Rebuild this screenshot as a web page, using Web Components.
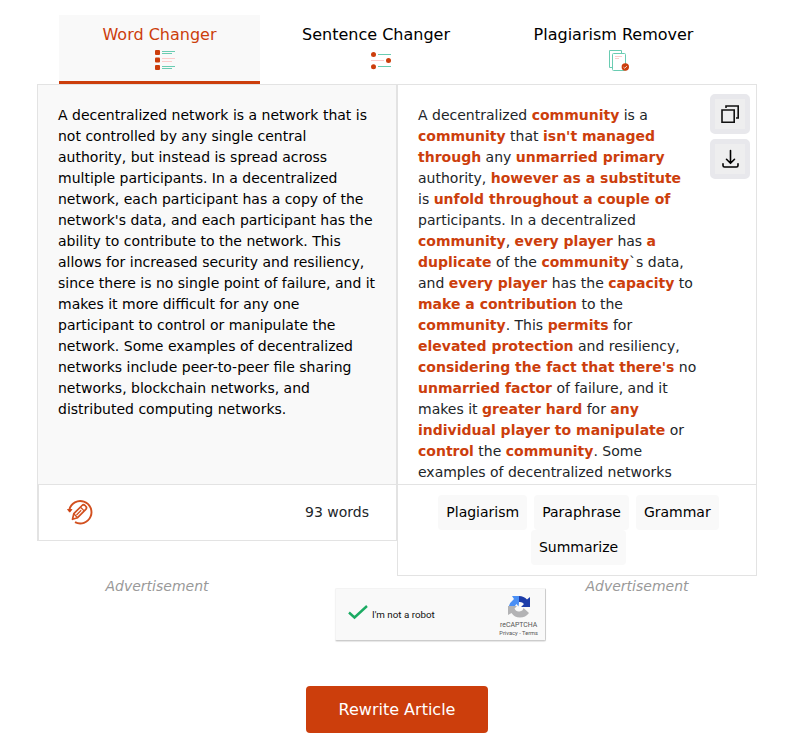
<!DOCTYPE html>
<html lang="en"><head><meta charset="utf-8"><title>Article Rewriter</title>
<style>
html,body{margin:0;background:#fff}
body{font:14px/21px "DejaVu Sans",sans-serif;color:#212529;height:753px;overflow:hidden}
</style></head><body>
<rewriter-app></rewriter-app>
<script>
function define(name, html){
  const t=document.createElement('template');t.innerHTML=html;
  customElements.define(name,class extends HTMLElement{
    constructor(){super();this.attachShadow({mode:'open'}).append(t.content.cloneNode(true));}
  });
}
define('tool-tab',`<style>
:host{display:flex;flex-direction:column;align-items:center;box-sizing:border-box;height:69px;padding-top:8px;font-size:16px;line-height:24px;color:#000;white-space:nowrap;border-bottom:3px solid transparent}
:host([active]){background:#f9f9f9;color:#cc3e0c;border-color:#cc3e0c}
.icon{height:20px;margin:3px 0 0 10px}
</style><slot></slot><div class="icon"><slot name="icon"></slot></div>`);
define('icon-button',`<style>
:host{display:grid;place-items:center;box-sizing:border-box;width:40px;height:40px;border:5px solid #e8e8ec;border-radius:5px;background:#eeeeef}
</style><slot></slot>`);
define('tool-chip',`<style>
:host{display:block;box-sizing:border-box;height:35px;padding:7px 8px;border-radius:4px;background:#f9f9f9;color:#000;white-space:nowrap}
</style><slot></slot>`);
define('source-panel',`<style>
:host{display:block;box-sizing:border-box;width:360px;height:457px;border:1px solid #e3e3e3}
.text{box-sizing:border-box;height:399px;padding:20px 17px 0 20px;background:#f9f9f9;color:#000}
.foot{display:flex;justify-content:space-between;align-items:center;box-sizing:border-box;height:56px;padding:0 27px 0 28px;border-top:1px solid #e3e3e3;border-left:1px solid #e3e3e3}
svg{display:block;margin-bottom:1px}
</style><div class="text"><slot></slot></div>
<div class="foot"><svg width="26" height="26" viewBox="0 0 26 26" fill="none" stroke="#d2501f">
<path d="M2.400 10.500A11.200 11.200 0 1 1 8 23.100" stroke-width="1.900"/><path d="M.5 10.500h4.500l-2.300 2.700z" fill="#cc3e0c" stroke="#cc3e0c" stroke-width=".8"/>
<path d="M5.500 20.300l1.300-5.600 8.200-8.200a2.200 2.200 0 0 1 3.100 0l.7.8a2.200 2.200 0 0 1 0 3.100L10.600 18.700z" stroke-width="1.700" stroke-linejoin="round"/><path d="M13.500 8.200l3.700 3.700M6.800 14.800l3.800 3.900M9.500 16l4.700-4.700" stroke-width="1.300"/></svg><span>93 words</span></div>`);
define('result-panel',`<style>
:host{display:block;box-sizing:border-box;width:360px;height:492px;border:1px solid #e3e3e3}
.body{display:flex;justify-content:space-between;box-sizing:border-box;height:399px;padding:0 6px 0 20px;overflow:hidden}
.text{width:281px;padding-top:20px}
.tools{display:flex;flex-direction:column;gap:5px;padding-top:9px}
.chips{display:flex;flex-wrap:wrap;justify-content:center;align-content:flex-start;column-gap:7px;box-sizing:border-box;height:91px;padding:10px 32px 0 35px;border-top:1px solid #e3e3e3}
</style><div class="body"><div class="text"><slot></slot></div><div class="tools">
<icon-button><svg width="20" height="20" viewBox="0 0 20 20" fill="none" stroke="#111" stroke-width="1.600"><path d="M2 6h12.200v12.200H2z"/><path d="M6 4V2h12.200v12H16"/></svg></icon-button>
<icon-button><svg width="20" height="20" viewBox="0 0 20 20" fill="none" stroke="#000" stroke-width="1.600" stroke-linecap="round" stroke-linejoin="round"><path d="M10.500 1.500v12.500M6.500 10.300l4 4 4-4M3 14.800V16.500q0 1.500 1.500 1.500h12q1.500 0 1.500-1.500v-1.700"/></svg></icon-button>
</div></div><div class="chips"><tool-chip>Plagiarism</tool-chip><tool-chip>Paraphrase</tool-chip><tool-chip>Grammar</tool-chip><tool-chip>Summarize</tool-chip></div>`);
define('robot-check',`<style>
:host{display:flex;align-items:center;box-sizing:border-box;width:211px;height:53px;padding:0 7px 0 12px;background:#f9f9f9;border:1px solid #f3f3f3;border-right-color:#ccc;border-bottom-color:#ccc;border-radius:2px;box-shadow:0 1px 1px #e6e6e6;font-family:Roboto,sans-serif;color:#111}
.label{margin:0 0 0 4px;font-size:9.800px;line-height:12px;flex:1;white-space:nowrap}
.check{margin-bottom:5px}
.brand{display:flex;flex-direction:column;align-items:center;color:#555;padding-top:3px}
.name{font-size:6.900px;line-height:8px;margin-top:3px}.legal{font-size:5.700px;line-height:8px}
svg{display:block}
</style><svg class="check" width="20" height="18" viewBox="0 0 20 18" fill="none" stroke="#1bab63" stroke-width="2.400"><path d="M1 9.500l5.500 5L19 3"/></svg>
<span class="label">I'm not a robot</span><div class="brand"><svg width="24" height="22" viewBox="0 0 24 22">
<path d="M12 0H5l2 3Q3 6 1.500 11H8q0-2 1.500-3l2 2.500L12 7z" fill="#4a8ff5"/>
<path d="M12 0q5 .2 8 3.500L23 1v10h-9l3-3q-2-2.500-5-2z" fill="#1c3ca9"/>
<path d="M1 10h9l-2.500 2.500q1.500 3.500 5 3t4-3.500l5.500 5q-3.500 4.500-9 4.500T4.500 17L1 19z" fill="#b3b3b5"/></svg>
<span class="name">reCAPTCHA</span><span class="legal">Privacy - Terms</span></div>`);
define('primary-button',`<style>
:host{display:grid;place-items:center;width:182px;height:47px;border-radius:4px;background:#cc3e0c;color:#fff;font-size:16px}
</style><slot></slot>`);
define('ad-label',`<style>:host{display:block;text-align:center;font-style:italic;color:#999}</style>Advertisement`);
define('rewriter-app',`<style>
:host{display:flex;flex-direction:column;width:720px;padding:15px 0 0 37px}
b{color:#cc3e0c}
.tabs{display:grid;grid-template-columns:201px 232px 243px;padding-left:22px}
.panels{display:flex;align-items:flex-start}
.lower{display:grid;grid-template-columns:240px 240px 240px;justify-items:center}
robot-check{margin:12px 0 0 58px;justify-self:start}
primary-button{margin:45px 0 0 269px}
svg{display:block}
</style>
<div class="tabs">
<tool-tab active>Word Changer<svg slot="icon" width="20" height="20" viewBox="0 0 20 20"><g fill="#cc3e0c"><rect y="0" width="5" height="5" rx="1"/><rect y="7.500" width="5" height="5" rx="1"/><rect y="15" width="5" height="5" rx="1"/></g><path d="M7 1.500h13M7 3.500h10M7 16.500h13M7 18.500h10" stroke="#6accb2"/><path d="M7 8.500h13M7 11.500h10" stroke="#fccccc"/></svg></tool-tab>
<tool-tab>Sentence Changer<svg slot="icon" width="20" height="20" viewBox="0 0 20 20"><g fill="#cc3e0c"><circle cx="2.500" cy="4.500" r="2.500"/><circle cx="17.500" cy="10.500" r="2.500"/><circle cx="2.500" cy="16.700" r="2.500"/></g><path d="M7 4.500h13M7 16.500h13" stroke="#6accb2"/><path d="M0 10.500h13" stroke="#fccccc"/></svg></tool-tab>
<tool-tab>Plagiarism Remover<svg slot="icon" width="20" height="21" viewBox="0 0 20 21" fill="none"><path d="M4 17.500H.5V.5h12V4M3.500 4.500q0-1 1-1h11q1 0 1 1v15q0 1-1 1h-11q-1 0-1-1z" stroke="#6accb2"/><path d="M6 6.500h7M6 8.500h4" stroke="#fccccc"/><circle cx="16.300" cy="17" r="3.700" fill="#cc3e0c"/><path d="M14.500 17.200l1.200 1 2.200-2" stroke="#fff" stroke-width=".8"/></svg></tool-tab>
</div>
<div class="panels">
<source-panel>A decentralized network is a network that is not controlled by any single central authority, but instead is spread across multiple participants. In a decentralized network, each participant has a copy of the network's data, and each participant has the ability to contribute to the network. This allows for increased security and resiliency, since there is no single point of failure, and it makes it more difficult for any one participant to control or manipulate the network. Some examples of decentralized networks include peer-to-peer file sharing networks, blockchain networks, and distributed computing networks.</source-panel>
<result-panel>A decentralized <b>community</b> is a <b>community</b> that <b>isn't managed through</b> any <b>unmarried primary</b> authority, <b>however as a substitute</b><br>is <b>unfold throughout a couple of</b> participants. In a decentralized <b>community</b>, <b>every player</b> has <b>a duplicate</b> of the <b>community</b>\`s data, and <b>every player</b> has the <b>capacity</b> to <b>make a contribution</b> to the <b>community</b>. This <b>permits</b> for <b>elevated protection</b> and resiliency, <b>considering the fact that there's</b> no <b>unmarried factor</b> of failure, and it makes it <b>greater hard</b> for <b>any individual player to manipulate</b> or <b>control</b> the <b>community</b>. Some examples of decentralized networks</result-panel>
</div>
<div class="lower"><ad-label></ad-label><robot-check></robot-check><ad-label></ad-label></div>
<primary-button>Rewrite Article</primary-button>`);
</script></body></html>
